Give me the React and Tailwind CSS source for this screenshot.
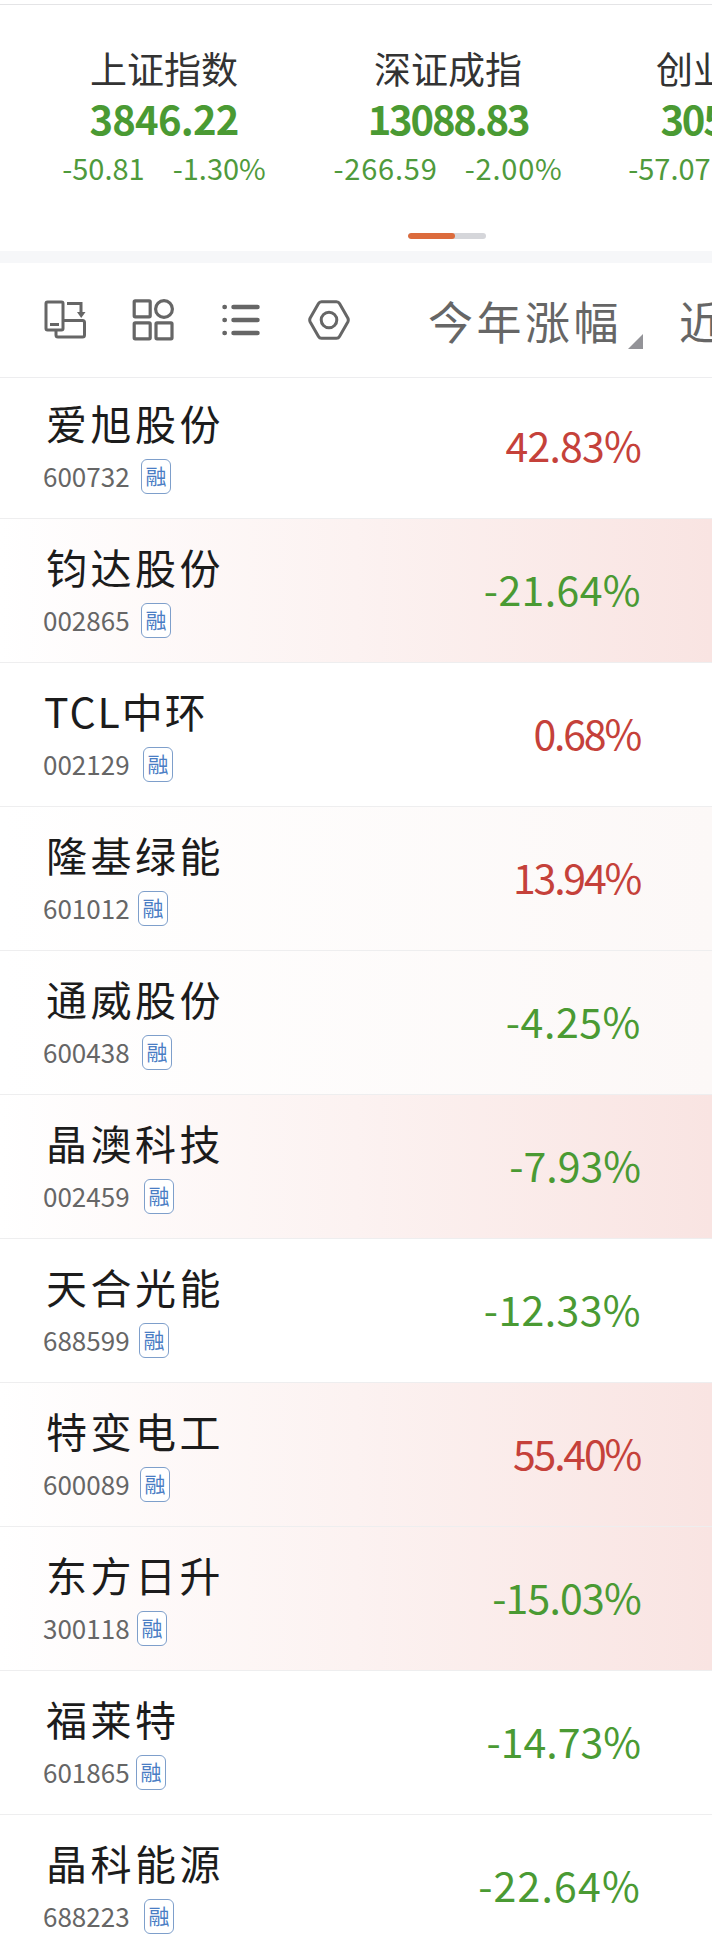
import clsx from "clsx";

const indices = [
  { name: "上证指数", value: "3846.22", change: "-50.81", percent: "-1.30%", box: "ml-[46px] w-[236px]", valueTrack: "tracking-[-0.8px]", changeTrack: "gap-[28px]" },
  { name: "深证成指", value: "13088.83", change: "-266.59", percent: "-2.00%", box: "ml-[34px] w-[264px]", valueTrack: "tracking-[-2.2px]", changeTrack: "gap-[27px] tracking-[0.8px]" },
  { name: "创业板指", value: "3052.59", change: "-57.07", percent: "-1.83%", box: "ml-[32px] w-[236px]", valueTrack: "tracking-[-2.2px]", changeTrack: "gap-[28px]" },
];

const stocks = [
  { name: "爱旭股份", code: "600732", codeWidth: "w-[98px]", percent: "42.83%", up: true, track: "tracking-[-0.8px]", tint: "none" },
  { name: "钧达股份", code: "002865", codeWidth: "w-[98px]", percent: "-21.64%", up: false, track: "tracking-[0.4px]", tint: "strong" },
  { name: "TCL中环", code: "002129", codeWidth: "w-[100px]", percent: "0.68%", up: true, track: "mr-[1px] tracking-[-2.2px]", tint: "none" },
  { name: "隆基绿能", code: "601012", codeWidth: "w-[95px]", percent: "13.94%", up: true, track: "mr-[1px] tracking-[-2.2px]", tint: "soft" },
  { name: "通威股份", code: "600438", codeWidth: "w-[99px]", percent: "-4.25%", up: false, track: "tracking-[0.6px]", tint: "soft" },
  { name: "晶澳科技", code: "002459", codeWidth: "w-[101px]", percent: "-7.93%", up: false, track: "", tint: "strong" },
  { name: "天合光能", code: "688599", codeWidth: "w-[96px]", percent: "-12.33%", up: false, track: "tracking-[0.4px]", tint: "none" },
  { name: "特变电工", code: "600089", codeWidth: "w-[97px]", percent: "55.40%", up: true, track: "mr-[1px] tracking-[-2.2px]", tint: "strong" },
  { name: "东方日升", code: "300118", codeWidth: "w-[94px]", percent: "-15.03%", up: false, track: "tracking-[-0.8px]", tint: "strong" },
  { name: "福莱特", code: "601865", codeWidth: "w-[93px]", percent: "-14.73%", up: false, track: "", tint: "none" },
  { name: "晶科能源", code: "688223", codeWidth: "w-[101px]", percent: "-22.64%", up: false, track: "tracking-[1.2px]", tint: "none" },
];

const tints = {
  none: "bg-white",
  soft: "bg-linear-to-r from-white to-[#fcf8f7]",
  strong: "bg-linear-to-r from-white via-[#fcf2f1] via-50% to-[#f9e4e2]",
};

function IndexCard({ item }) {
  return (
    <div className={clsx("flex shrink-0 flex-col items-center whitespace-nowrap", item.box)}>
      <div className="text-[37px] leading-[40px] text-[#333333]">{item.name}</div>
      <div className={clsx("mt-2 text-[40px] leading-[44px] font-bold text-[#4a9a33]", item.valueTrack)}>{item.value}</div>
      <div className={clsx("mt-2 flex text-[29px] leading-[38px] text-[#4f9a3c]", item.changeTrack)}>
        <span>{item.change}</span>
        <span>{item.percent}</span>
      </div>
    </div>
  );
}

function Toolbar() {
  return (
    <div className="flex h-[115px] shrink-0 items-center overflow-hidden border-b border-[#ededef] bg-white pl-11 text-[#666666]">
      <svg className="size-[42px] shrink-0" viewBox="0 0 42 42" fill="none" stroke="currentColor" strokeWidth="3">
        <rect x="2" y="3" width="17" height="28" rx="1.5" />
        <path d="M6 25.5h9M12 31v5q0 2 2 2h24.500q2 0 2-2V23.500q0-2-2-2H20M23 4.500h14V14" />
        <path d="M33 13h8.500L37.200 19z" fill="currentColor" stroke="none" />
      </svg>
      <svg className="ml-[46px] size-[42px] shrink-0" viewBox="0 0 42 42" fill="none" stroke="currentColor" strokeWidth="3.2">
        <rect x="2.2" y="1.8" width="16" height="16" rx="1" />
        <circle cx="32" cy="10" r="8.4" />
        <rect x="2.2" y="23.8" width="16" height="16" rx="1" />
        <rect x="24" y="23.8" width="16" height="16" rx="1" />
      </svg>
      <svg className="ml-[46px] size-[42px] shrink-0" viewBox="0 0 42 42" fill="none" stroke="currentColor" strokeWidth="4.5" strokeLinecap="round">
        <path d="M13.500 8h24M13.500 21h24M13.500 34h24M4.500 8h.3M4.500 21h.3M4.500 34h.3" />
      </svg>
      <svg className="ml-[46px] size-[42px] shrink-0" viewBox="0 0 42 42" fill="none" stroke="currentColor" strokeWidth="3" strokeLinejoin="round">
        <path d="M13.500 2.800h15q2 0 3 1.800l8.300 14.400q1 2 0 4l-8.300 14.400q-1 1.800-3 1.800h-15q-2 0-3-1.800L2.200 23q-1-2 0-4l8.300-14.400q1-1.800 3-1.800z" />
        <circle cx="21" cy="21" r="7.8" />
      </svg>
      <div className="ml-[78px] shrink-0 text-[45px] leading-none tracking-[3.5px]">今年涨幅</div>
      <svg className="mt-[42px] ml-1.5 size-[15px] shrink-0" viewBox="0 0 15 15">
        <path d="M15 0v15H0z" fill="#939398" />
      </svg>
      <div className="ml-9 shrink-0 text-[45px] leading-none">近一月</div>
    </div>
  );
}

function StockRow({ stock, first }) {
  const latin = /^[A-Z]/.test(stock.name);

  return (
    <div className={clsx("flex shrink-0 items-start justify-between border-b border-[#eeeeef] pr-[71px] pl-[43px]", first ? "h-[141px] pt-[19px]" : "h-[144px] pt-[22px]", tints[stock.tint])}>
      <div>
        <div className={clsx("text-[41px] leading-[50px] text-[#1c1c1c]", latin ? "ml-px tracking-[2px]" : "ml-[3px] tracking-[3.5px]")}>{stock.name}</div>
        <div className="mt-3 flex h-[35px] items-center">
          <span className={clsx("text-[26px] leading-[33px] -mt-0.5 text-[#666666]", stock.codeWidth)}>{stock.code}</span>
          <span className="flex h-[35px] w-[30px] items-center justify-center rounded-[6px] border border-[#7e9fcb] bg-white pb-0.5 text-[21px] leading-none text-[#4a7dc4]">融</span>
        </div>
      </div>
      <div className={clsx("mt-[22px] text-[41px] leading-[50px]", stock.track, stock.up ? "text-[#c5413a]" : "text-[#4a9a33]")}>{stock.percent}</div>
    </div>
  );
}

export default function App() {
  return (
    <div className="flex h-[1936px] w-[712px] flex-col overflow-hidden bg-white font-['Noto_Sans_CJK_SC',sans-serif]">
      {/* Market indices */}
      <div className="mt-1 flex h-[247px] shrink-0 flex-col overflow-hidden border-t border-[#e4e4e6]">
        <div className="mt-[43px] flex">
          {indices.map((item) => (
            <IndexCard key={item.name} item={item} />
          ))}
        </div>
        <div className="mt-[47px] ml-[408px] h-1.5 w-[78px] shrink-0 overflow-hidden rounded-full bg-[#d5d6da]">
          <div className="h-full w-[47px] rounded-full bg-[#dc6b3c]" />
        </div>
      </div>
      <div className="h-3 shrink-0 bg-[#f6f7f9]" />

      <Toolbar />

      {stocks.map((stock, i) => (
        <StockRow key={stock.code} stock={stock} first={i === 0} />
      ))}
    </div>
  );
}
